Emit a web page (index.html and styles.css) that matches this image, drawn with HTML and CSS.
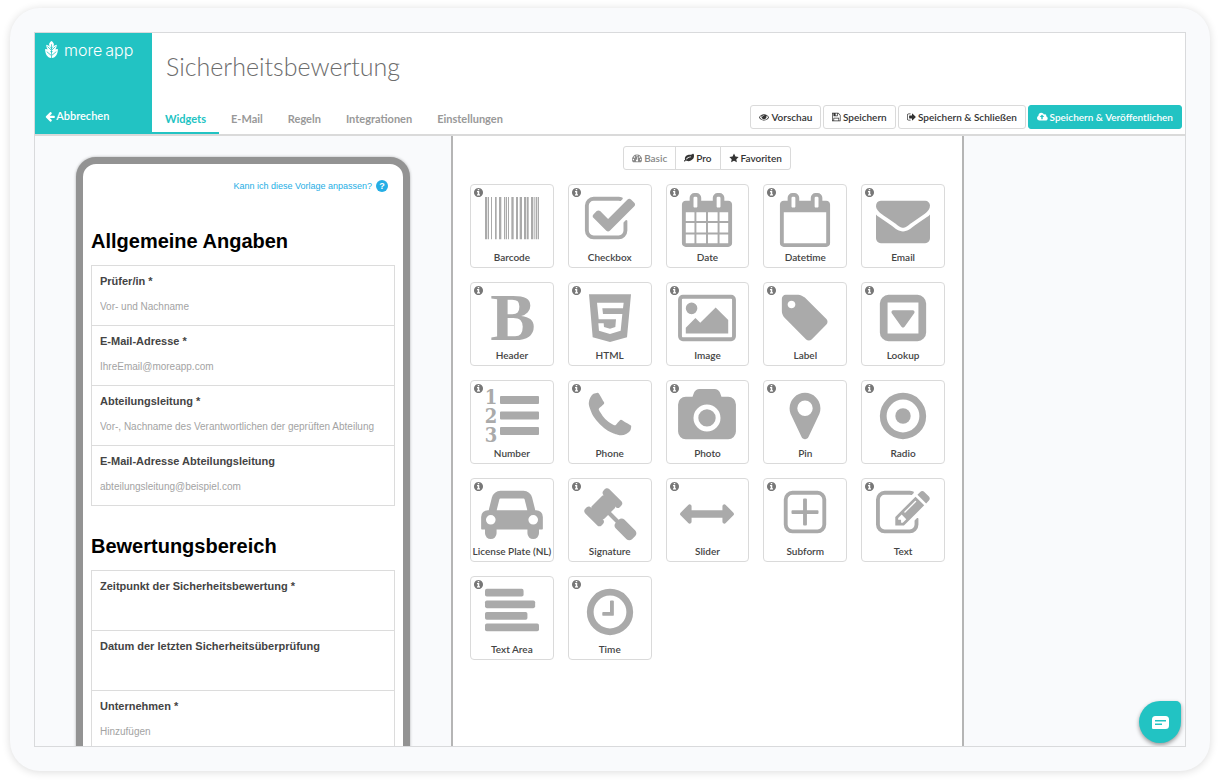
FILE: index.html
```html
<!DOCTYPE html>
<html lang="de">
<head>
<meta charset="utf-8">
<title>Sicherheitsbewertung – moreapp</title>
<meta name="viewport" content="width=device-width, initial-scale=1">
<link rel="stylesheet" href="styles.css">
</head>
<body>
<svg class="sprite" aria-hidden="true">
  <symbol id="info" viewBox="128 128 1536 1536"><path d="M1152 1376v-160q0-14-9-23t-23-9h-96v-512q0-14-9-23t-23-9h-320q-14 0-23 9t-9 23v160q0 14 9 23t23 9h96v320h-96q-14 0-23 9t-9 23v160q0 14 9 23t23 9h448q14 0 23-9t9-23zm-128-896v-160q0-14-9-23t-23-9h-192q-14 0-23 9t-9 23v160q0 14 9 23t23 9h192q14 0 23-9t9-23zm640 416q0 209-103 385.500t-279.500 279.500-385.500 103-385.500-103-279.500-279.500-103-385.500 103-385.500 279.500-279.500 385.500-103 385.500 103 279.500 279.500 103 385.500z"/></symbol>
</svg>
<div class="card">
  <div class="app">
    <header class="topbar">
      <div class="brand">
        <a class="logo" href="#">
          <svg class="logo-mark" viewBox="0 0 24 32" aria-hidden="true"><path d="M12 0c3 2 4.500 4 4.500 6.500S15 10.500 12.700 12V6h-1.400v6C9 10.500 7.500 9 7.500 6.500S9 2 12 0zM2 7c4 1 8 3 9.300 8v4C6 18 2 14 2 7zM22 7c-4 1-8 3-9.300 8v4C18 18 22 14 22 7zM0 15c5 0 10 2 11.300 7v10C4 31 0 25 0 15zM24 15c-5 0-10 2-11.300 7v10C20 31 24 25 24 15z"/><path class="vein" d="M4.500 10.500l6.800 6.500M19.500 10.500L12.700 17M3 20l8.300 7M21 20l-8.300 7"/></svg>
          <span class="wordmark"><span>more</span><span>app</span></span>
        </a>
        <a class="back" href="#"><svg class="fa" viewBox="64 0 1664 1792" aria-hidden="true"><path d="M1664 896v128q0 53-32.500 90.500t-84.500 37.500h-704l293 294q38 36 38 90t-38 90l-75 76q-37 37-90 37-52 0-91-37l-651-652q-37-37-37-90 0-52 37-91l651-650q38-38 91-38 52 0 90 38l75 74q38 38 38 91t-38 91l-293 293h704q52 0 84.500 37.500t32.500 90.500z"/></svg>Abbrechen</a>
      </div>
      <div class="head-main">
        <h1>Sicherheitsbewertung</h1>
        <div class="head-row">
          <nav class="tabs">
            <a class="active" href="#">Widgets</a>
            <a href="#">E-Mail</a>
            <a href="#">Regeln</a>
            <a href="#">Integrationen</a>
            <a href="#">Einstellungen</a>
          </nav>
          <div class="actions">
            <button class="btn" type="button"><svg class="fa" viewBox="0 0 1792 1792" aria-hidden="true"><path d="M1664 960q-152-236-381-353 61 104 61 225 0 185-131.500 316.500t-316.500 131.500-316.500-131.500-131.500-316.500q0-121 61-225-229 117-381 353 133 205 333.500 326.500t434.500 121.500 434.500-121.500 333.500-326.500zm-720-384q0-20-14-34t-34-14q-125 0-214.500 89.500t-89.500 214.500q0 20 14 34t34 14 34-14 14-34q0-86 61-147t147-61q20 0 34-14t14-34zm848 384q0 34-20 69-140 230-376.500 368.500t-499.500 138.500-499.500-139-376.500-368q-20-35-20-69t20-69q140-229 376.500-368t499.500-139 499.500 139 376.500 368q20 35 20 69z"/></svg>Vorschau</button>
            <button class="btn" type="button"><svg class="fa" viewBox="128 0 1536 1792" aria-hidden="true"><path d="M512 1536h768v-384h-768v384zm896 0h128v-896q0-14-10-38.500t-20-34.500l-281-281q-10-10-34-20t-39-10v416q0 40-28 68t-68 28h-576q-40 0-68-28t-28-68v-416h-128v1280h128v-416q0-40 28-68t68-28h832q40 0 68 28t28 68v416zm-384-928v-320q0-13-9.500-22.500t-22.500-9.500h-192q-13 0-22.500 9.500t-9.500 22.500v320q0 13 9.500 22.500t22.500 9.500h192q13 0 22.500-9.500t9.500-22.500zm640 32v928q0 40-28 68t-68 28h-1344q-40 0-68-28t-28-68v-1344q0-40 28-68t68-28h928q40 0 88 20t76 48l280 280q28 28 48 76t20 88z"/></svg>Speichern</button>
            <button class="btn" type="button"><svg class="fa" viewBox="64 0 1664 1792" aria-hidden="true"><path d="M704 1440q0 4 1 20t.5 26.500-3 23.500-10 19.500-20.500 6.500h-320q-119 0-203.500-84.500t-84.500-203.500v-704q0-119 84.500-203.500t203.500-84.500h320q13 0 22.500 9.500t9.500 22.500q0 4 1 20t.5 26.500-3 23.500-10 19.500-20.500 6.500h-320q-66 0-113 47t-47 113v704q0 66 47 113t113 47h312l11.500 1 11.500 3 8 5.500 7 9 2 13.500zm928-544q0 26-19 45l-544 544q-19 19-45 19t-45-19-19-45v-288h-448q-26 0-45-19t-19-45v-384q0-26 19-45t45-19h448v-288q0-26 19-45t45-19 45 19l544 544q19 19 19 45z"/></svg>Speichern &amp; Schließen</button>
            <button class="btn primary" type="button"><svg class="fa" viewBox="-64 0 1920 1792" aria-hidden="true"><path d="M1216 864q0-14-9-23l-352-352q-9-9-23-9t-23 9l-351 351q-10 12-10 24 0 14 9 23t23 9h224v352q0 13 9.500 22.500t22.500 9.500h192q13 0 22.500-9.500t9.500-22.500v-352h224q13 0 22.500-9.500t9.500-22.500zm640 288q0 159-112.500 271.500t-271.500 112.500h-1088q-185 0-316.500-131.500t-131.500-316.500q0-130 70-240t188-165q-2-30-2-43 0-212 150-362t362-150q156 0 285.500 87t188.500 231q71-62 166-62 106 0 181 75t75 181q0 76-41 138 130 31 213.500 135.500t83.500 238.500z"/></svg>Speichern &amp; Veröffentlichen</button>
          </div>
        </div>
      </div>
    </header>

    <main class="workspace">
      <section class="preview">
        <form class="phone">
          <a class="help" href="#">Kann ich diese Vorlage anpassen? <span class="help-badge">?</span></a>
          <h2>Allgemeine Angaben</h2>
          <div class="fields">
            <div class="field"><label for="f1">Prüfer/in *</label><input id="f1" type="text" placeholder="Vor- und Nachname"></div>
            <div class="field"><label for="f2">E-Mail-Adresse *</label><input id="f2" type="text" placeholder="IhreEmail@moreapp.com"></div>
            <div class="field"><label for="f3">Abteilungsleitung *</label><input id="f3" type="text" placeholder="Vor-, Nachname des Verantwortlichen der geprüften Abteilung"></div>
            <div class="field"><label for="f4">E-Mail-Adresse Abteilungsleitung</label><input id="f4" type="text" placeholder="abteilungsleitung@beispiel.com"></div>
          </div>
          <h2>Bewertungsbereich</h2>
          <div class="fields">
            <div class="field"><label for="f5">Zeitpunkt der Sicherheitsbewertung *</label><input id="f5" type="text"></div>
            <div class="field"><label for="f6">Datum der letzten Sicherheitsüberprüfung</label><input id="f6" type="text"></div>
            <div class="field"><label for="f7">Unternehmen *</label><input id="f7" type="text" placeholder="Hinzufügen"></div>
          </div>
        </form>
      </section>

      <section class="palette">
        <div class="segments">
          <button class="current" type="button"><svg class="fa" viewBox="0 0 1792 1792" aria-hidden="true"><path d="M384 1152q0-53-37.500-90.500t-90.500-37.500-90.500 37.500-37.500 90.500 37.500 90.500 90.500 37.500 90.500-37.500 37.500-90.500zm192-448q0-53-37.500-90.500t-90.500-37.500-90.500 37.500-37.500 90.500 37.500 90.500 90.500 37.500 90.500-37.500 37.500-90.500zm428 481l101-382q6-26-7.500-48.500t-38.500-29.500-48 6.500-30 39.500l-101 382q-60 5-107 43.500t-63 98.500q-20 77 20 146t117 89 146-20 89-117q16-60-6-117t-72-91zm660-33q0-53-37.500-90.500t-90.500-37.500-90.500 37.500-37.500 90.500 37.500 90.500 90.500 37.500 90.500-37.500 37.500-90.500zm-640-640q0-53-37.500-90.500t-90.500-37.500-90.500 37.500-37.500 90.500 37.500 90.500 90.500 37.500 90.500-37.500 37.500-90.500zm448 192q0-53-37.500-90.500t-90.500-37.500-90.500 37.500-37.500 90.500 37.500 90.500 90.500 37.500 90.500-37.500 37.500-90.500zm320 448q0 261-141 483-19 29-54 29h-1402q-35 0-54-29-141-221-141-483 0-182 71-348t191-286 286-191 348-71 348 71 286 191 191 286 71 348z"/></svg>Basic</button>
          <button type="button"><svg class="fa" viewBox="0 0 1792 1792" aria-hidden="true"><path d="M1280 704q0-26-19-45t-45-19q-172 0-318 49.500t-259.500 134-235.500 219.500q-19 21-19 45 0 26 19 45t45 19q24 0 45-19 27-24 74-71t67-66q137-124 268.500-176t313.500-52q26 0 45-19t19-45zm512-198q0 95-20 193-46 224-184.500 383t-357.500 268q-214 108-438 108-148 0-286-47-15-5-88-42t-96-37q-16 0-39.500 32t-45 70-52.500 70-60 32q-43 0-63.500-17.500t-45.500-59.500q-2-4-6-11t-5.500-10-3-9.500-1.500-13.500q0-35 31-73.500t68-65.500 68-56 31-48q0-4-14-38t-16-44q-9-51-9-104 0-115 43.500-220t119-184.500 170.500-139 204-95.500q55-18 145-25.500t179.500-9 178.500-6 163.500-24 113.500-56.500l29.500-29.500 29.500-28 27-20 36.500-16 43.500-4.500q39 0 70.500 46t47.500 112 24 124 8 96z"/></svg>Pro</button>
          <button type="button"><svg class="fa" viewBox="0 0 1792 1792" aria-hidden="true"><path d="M896 90l258 522 576 84-417 406 99 574-516-271-516 271 99-574L62 696l576-84z"/></svg>Favoriten</button>
        </div>

        <div class="grid">
          <button class="tile" type="button"><svg class="info"><use href="#info"/></svg>
            <svg class="pic" viewBox="0 0 162 162"><path d="M0 12h7v127H0zM9 12h3v127H9zM18 12h3v127h-3zM30 12h5v127h-5zM42 12h7v127h-7zM57 12h3v127h-3zM62 12h4v127h-4zM69 12h3v127h-3zM79 12h7v127h-7zM93 12h6v127h-6zM104 12h7v127h-7zM117 12h7v127h-7zM126 12h5v127h-5zM138 12h7v127h-7zM148 12h3v127h-3zM153 12h3v127h-3zM158 12h4v127h-4z"/></svg><span>Barcode</span></button>
          <button class="tile" type="button"><svg class="info"><use href="#info"/></svg>
            <svg class="pic" viewBox="0 0 1792 1792"><path d="M1472 930v318q0 119-84.500 203.500t-203.500 84.500h-832q-119 0-203.500-84.500t-84.500-203.500v-832q0-119 84.500-203.500t203.500-84.500h832q63 0 117 25 15 7 18 23 3 17-9 29l-49 49q-10 10-23 10-3 0-9-2-23-6-45-6h-832q-66 0-113 47t-47 113v832q0 66 47 113t113 47h832q66 0 113-47t47-113v-254q0-13 9-22l64-64q10-10 23-10 6 0 12 3 20 8 20 29zm231-489l-814 814q-24 24-57 24t-57-24l-430-430q-24-24-24-57t24-57l110-110q24-24 57-24t57 24l263 263 647-647q24-24 57-24t57 24l110 110q24 24 24 57t-24 57z"/></svg><span>Checkbox</span></button>
          <button class="tile" type="button"><svg class="info"><use href="#info"/></svg>
            <svg class="pic" viewBox="0 0 1792 1792"><path d="M192 1664h288v-288h-288v288zm352 0h320v-288h-320v288zm-352-352h288v-320h-288v320zm352 0h320v-320h-320v320zm-352-384h288v-288h-288v288zm736 736h320v-288h-320v288zm-384-736h320v-288h-320v288zm768 736h288v-288h-288v288zm-384-352h320v-320h-320v320zm-352-864v-288q0-13-9.500-22.500t-22.500-9.500h-64q-13 0-22.500 9.500t-9.500 22.500v288q0 13 9.500 22.500t22.500 9.500h64q13 0 22.500-9.500t9.500-22.500zm736 864h288v-320h-288v320zm-384-384h320v-288h-320v288zm384 0h288v-288h-288v288zm32-480v-288q0-13-9.500-22.500t-22.500-9.500h-64q-13 0-22.500 9.500t-9.500 22.500v288q0 13 9.500 22.500t22.500 9.500h64q13 0 22.500-9.500t9.500-22.500zm384-64v1280q0 52-38 90t-90 38h-1408q-52 0-90-38t-38-90v-1280q0-52 38-90t90-38h128v-96q0-66 47-113t113-47h64q66 0 113 47t47 113v96h384v-96q0-66 47-113t113-47h64q66 0 113 47t47 113v96h128q52 0 90 38t38 90z"/></svg><span>Date</span></button>
          <button class="tile" type="button"><svg class="info"><use href="#info"/></svg>
            <svg class="pic" viewBox="0 0 1792 1792"><path d="M192 1664h1408v-1024h-1408v1024zm384-1216v-288q0-13-9.500-22.500t-22.500-9.500h-64q-13 0-22.500 9.500t-9.500 22.500v288q0 13 9.500 22.500t22.500 9.500h64q13 0 22.500-9.500t9.500-22.500zm768 0v-288q0-13-9.500-22.500t-22.500-9.500h-64q-13 0-22.500 9.500t-9.500 22.500v288q0 13 9.500 22.500t22.500 9.500h64q13 0 22.500-9.500t9.500-22.500zm384-64v1280q0 52-38 90t-90 38h-1408q-52 0-90-38t-38-90v-1280q0-52 38-90t90-38h128v-96q0-66 47-113t113-47h64q66 0 113 47t47 113v96h384v-96q0-66 47-113t113-47h64q66 0 113 47t47 113v96h128q52 0 90 38t38 90z"/></svg><span>Datetime</span></button>
          <button class="tile" type="button"><svg class="info"><use href="#info"/></svg>
            <svg class="pic" viewBox="0 0 1792 1792"><path d="M1792 710v794q0 66-47 113t-113 47h-1472q-66 0-113-47t-47-113v-794q44 49 101 87 362 246 497 345 57 42 92.500 65.500t94.500 48 110 24.500h2q51 0 110-24.500t94.500-48 92.500-65.500q170-123 498-345 57-39 100-87zm0-294q0 79-49 151t-122 123q-376 261-468 325-10 7-42.500 31t-54 38.500-52 32.500-57.500 27-50 9h-2q-23 0-50-9t-57.500-27-52-32.500-54-38.500-42.500-31q-91-64-262-182.500t-205-142.500q-62-42-117-115.500t-55-136.500q0-78 41.500-130t118.500-52h1472q65 0 112.500 47t47.500 113z"/></svg><span>Email</span></button>

          <button class="tile" type="button"><svg class="info"><use href="#info"/></svg>
            <svg class="pic" viewBox="0 0 54 54"><text class="glyph-b" x="28" y="49">B</text></svg><span>Header</span></button>
          <button class="tile" type="button"><svg class="info"><use href="#info"/></svg>
            <svg class="pic" viewBox="369 65 162 162"><path fill-rule="evenodd" d="M387 75h126l-12 129-51 14-52-14zM411 100l5 50h52l-2 23-16 5-18-5-1-11h-16l2 22 33 10 32-10 5-50h-58l-2-17h62l2-17z"/></svg><span>HTML</span></button>
          <button class="tile" type="button"><svg class="info"><use href="#info"/></svg>
            <svg class="pic wide" viewBox="-64 0 1920 1792"><path d="M576 576q0 80-56 136t-136 56-136-56-56-136 56-136 136-56 136 56 56 136zm1024 384v448h-1408v-192l320-320 160 160 512-512zm96-704h-1600q-13 0-22.500 9.500t-9.500 22.500v1216q0 13 9.500 22.500t22.500 9.500h1600q13 0 22.500-9.500t9.500-22.500v-1216q0-13-9.500-22.500t-22.500-9.500zm160 32v1216q0 66-47 113t-113 47h-1600q-66 0-113-47t-47-113v-1216q0-66 47-113t113-47h1600q66 0 113 47t47 113z"/></svg><span>Image</span></button>
          <button class="tile" type="button"><svg class="info"><use href="#info"/></svg>
            <svg class="pic" viewBox="0 0 1792 1792"><path d="M576 448q0-53-37.500-90.500t-90.500-37.500-90.500 37.500-37.500 90.500 37.500 90.500 90.500 37.500 90.500-37.500 37.500-90.500zm1067 576q0 53-37 90l-491 492q-39 37-91 37-53 0-90-37l-715-716q-38-37-64.500-101t-26.500-117v-416q0-52 38-90t90-38h416q53 0 117 26.500t102 64.500l715 714q37 39 37 91z"/></svg><span>Label</span></button>
          <button class="tile" type="button"><svg class="info"><use href="#info"/></svg>
            <svg class="pic" viewBox="0 0 1792 1792"><path fill-rule="evenodd" d="M416 128h960q119 0 203.500 84.500T1664 416v960q0 119-84.500 203.500T1376 1664H416q-119 0-203.500-84.500T128 1376V416q0-119 84.500-203.500T416 128zM384 384v1024h1024V384z"/><path d="M1273 675q17 35-5 66l-320 448q-19 27-52 27t-52-27L524 741q-22-31-5-66 17-35 57-35h640q40 0 57 35z"/></svg><span>Lookup</span></button>

          <button class="tile" type="button"><svg class="info"><use href="#info"/></svg>
            <svg class="pic wide" viewBox="0 0 58 54"><g class="digits"><text x="8" y="15">1</text><text x="8" y="34">2</text><text x="8" y="53">3</text></g><path d="M18 7h37q1 0 1 1v6q0 1-1 1H18q-1 0-1-1V8q0-1 1-1zM18 22.500h37q1 0 1 1v6q0 1-1 1H18q-1 0-1-1v-6q0-1 1-1zM18 38h37q1 0 1 1v6q0 1-1 1H18q-1 0-1-1v-6q0-1 1-1z"/></svg><span>Number</span></button>
          <button class="tile" type="button"><svg class="info"><use href="#info"/></svg>
            <svg class="pic" viewBox="0 0 1792 1792"><path d="M1600 1240q0 27-10 70.500t-21 68.500q-21 50-122 106-94 51-186 51-27 0-53-3.500t-57.500-12.500-47-14.500-55.500-20.500-49-18q-98-35-175-83-127-79-264-216t-216-264q-48-77-83-175-3-9-18-49t-20.500-55.500-14.500-47-12.500-57.500-3.500-53q0-92 51-186 56-101 106-122 25-11 68.500-21t70.500-10q14 0 21 3 18 6 53 76 11 19 30 54t35 63.500 31 53.500q3 4 17.500 25t21.500 35.500 7 28.500q0 20-28.500 50t-62 55-62 53-28.500 46q0 9 5 22.500t8.500 20.500 14 24 11.500 19q76 137 174 235t235 174q2 1 19 11.500t24 14 20.500 8.500 22.500 5q18 0 46-28.500t53-62 55-62 50-28.500q14 0 28.500 7t35.500 21.500 25 17.500q25 15 53.500 31t63.500 35 54 30q70 35 76 53 3 7 3 21z"/></svg><span>Phone</span></button>
          <button class="tile" type="button"><svg class="info"><use href="#info"/></svg>
            <svg class="pic wide" viewBox="0 0 1920 1792"><path d="M960 672q119 0 203.500 84.500t84.500 203.500-84.500 203.500-203.500 84.500-203.500-84.500-84.500-203.500 84.500-203.500 203.500-84.500zm704-416q106 0 181 75t75 181v896q0 106-75 181t-181 75h-1408q-106 0-181-75t-75-181v-896q0-106 75-181t181-75h224l51-136q19-49 69.500-84.500t103.500-35.500h512q53 0 103.500 35.500t69.500 84.500l51 136h224zm-704 1152q185 0 316.500-131.500t131.500-316.500-131.500-316.500-316.500-131.500-316.500 131.500-131.500 316.500 131.500 316.500 316.500 131.500z"/></svg><span>Photo</span></button>
          <button class="tile" type="button"><svg class="info"><use href="#info"/></svg>
            <svg class="pic" viewBox="0 0 1792 1792"><path d="M1152 640q0-106-75-181t-181-75-181 75-75 181 75 181 181 75 181-75 75-181zm256 0q0 109-33 179l-364 774q-16 33-47.500 52t-67.500 19-67.500-19-46.500-52l-365-774q-33-70-33-179 0-212 150-362t362-150 362 150 150 362z"/></svg><span>Pin</span></button>
          <button class="tile" type="button"><svg class="info"><use href="#info"/></svg>
            <svg class="pic" viewBox="0 0 1792 1792"><circle class="ring" cx="896" cy="896" r="656"/><circle cx="896" cy="896" r="256"/></svg><span>Radio</span></button>

          <button class="tile" type="button"><svg class="info"><use href="#info"/></svg>
            <svg class="pic wider" viewBox="0 0 2048 1792"><path d="M480 1088q0-66-47-113t-113-47-113 47-47 113 47 113 113 47 113-47 47-113zm36-320h1016l-89-357q-2-8-14-17.500t-21-9.500h-768q-9 0-21 9.500t-14 17.500zm1372 320q0-66-47-113t-113-47-113 47-47 113 47 113 113 47 113-47 47-113zm160-96v384q0 14-9 23t-23 9h-96v128q0 80-56 136t-136 56-136-56-56-136v-128h-1024v128q0 80-56 136t-136 56-136-56-56-136v-128h-96q-14 0-23-9t-9-23v-384q0-93 65.500-158.500t158.500-65.500h28l105-419q23-94 104-157.500t179-63.500h768q98 0 179 63.500t104 157.500l105 419h28q93 0 158.500 65.500t65.500 158.500z"/></svg><span>License Plate (NL)</span></button>
          <button class="tile" type="button"><svg class="info"><use href="#info"/></svg>
            <svg class="pic" viewBox="0 0 1792 1792"><path d="M1771 1536q0 53-37 90l-107 108q-39 37-91 37-53 0-90-37l-363-364q-38-36-38-90 0-53 43-96l-256-256-126 126q-14 14-34 14t-34-14q2 2 12.500 12t12.500 13 10 11.500 10 13.500 6 13.500 5.500 16.500 1.500 18q0 38-28 68-3 3-16.500 18t-19 20.500-18.500 16.500-22 15.500-22 9-26 4.500q-40 0-68-28l-408-408q-28-28-28-68 0-13 4.500-26t9-22 15.500-22 16.500-18.500 20.500-19 18-16.500q30-28 68-28 10 0 18 1.500t16.500 5.500 13.500 6 13.500 10 11.500 10 13 12.500 12 12.500q-14-14-14-34t14-34l348-348q14-14 34-14t34 14q-2-2-12.500-12t-12.500-13-10-11.500-10-13.500-6-13.500-5.500-16.500-1.500-18q0-38 28-68 3-3 16.500-18t19-20.500 18.500-16.500 22-15.500 22-9 26-4.500q40 0 68 28l408 408q28 28 28 68 0 13-4.500 26t-9 22-15.500 22-16.500 18.500-20.500 19-18 16.500q-30 28-68 28-10 0-18-1.500t-16.500-5.500-13.500-6-13.500-10-11.500-10-13-12.500-12-12.500q14 14 14 34t-14 34l-126 126 256 256q43-43 96-43 52 0 91 37l363 363q37 39 37 91z"/></svg><span>Signature</span></button>
          <button class="tile" type="button"><svg class="info"><use href="#info"/></svg>
            <svg class="pic" viewBox="0 0 1792 1792"><path d="M1792 896q0 26-19 45l-256 256q-19 19-45 19t-45-19-19-45v-128h-1024v128q0 26-19 45t-45 19-45-19l-256-256q-19-19-19-45t19-45l256-256q19-19 45-19t45 19 19 45v128h1024v-128q0-26 19-45t45-19 45 19l256 256q19 19 19 45z"/></svg><span>Slider</span></button>
          <button class="tile" type="button"><svg class="info"><use href="#info"/></svg>
            <svg class="pic" viewBox="0 0 1792 1792"><rect class="frame" x="256" y="192" width="1280" height="1280" rx="224"/><path d="M480 768h352V416q0-32 32-32h64q32 0 32 32v352h352q32 0 32 32v64q0 32-32 32H960v352q0 32-32 32h-64q-32 0-32-32V896H480q-32 0-32-32v-64q0-32 32-32z"/></svg><span>Subform</span></button>
          <button class="tile" type="button"><svg class="info"><use href="#info"/></svg>
            <svg class="pic" viewBox="0 0 1792 1792"><path d="M888 1184l116-116-152-152-116 116v56h96v96h56zm440-720q-16-16-33 1l-350 350q-17 17-1 33t33-1l350-350q17-17 1-33zm80 594v190q0 119-84.500 203.500t-203.500 84.500h-832q-119 0-203.500-84.500t-84.500-203.500v-832q0-119 84.500-203.500t203.500-84.500h832q63 0 117 25 15 7 18 23 3 17-9 29l-49 49q-14 14-32 8-23-6-45-6h-832q-66 0-113 47t-47 113v832q0 66 47 113t113 47h832q66 0 113-47t47-113v-126q0-13 9-22l64-64q15-15 35-7t20 29zm-96-738l288 288-672 672h-288v-288zm444 132l-92 92-288-288 92-92q28-28 68-28t68 28l152 152q28 28 28 68t-28 68z"/></svg><span>Text</span></button>

          <button class="tile" type="button"><svg class="info"><use href="#info"/></svg>
            <svg class="pic" viewBox="0 0 1792 1792"><rect x="0" y="128" width="1280" height="256" rx="60"/><rect x="0" y="512" width="1664" height="256" rx="60"/><rect x="0" y="896" width="1408" height="256" rx="60"/><rect x="0" y="1280" width="1792" height="256" rx="60"/></svg><span>Text Area</span></button>
          <button class="tile" type="button"><svg class="info"><use href="#info"/></svg>
            <svg class="pic" viewBox="0 0 1792 1792"><circle class="ring" cx="896" cy="896" r="656"/><path d="M1024 544v448q0 14-9 23t-23 9h-320q-14 0-23-9t-9-23v-64q0-14 9-23t23-9h224v-352q0-14 9-23t23-9h64q14 0 23 9t9 23z"/></svg><span>Time</span></button>
        </div>
      </section>
    </main>

    <button class="chat" type="button" aria-label="Chat">
      <svg viewBox="0 0 17 13" aria-hidden="true"><path fill-rule="evenodd" d="M3.500 0h10Q17 0 17 3.500v6Q17 13 13.500 13H1q-1 0-1-1V3.500Q0 0 3.500 0zM3 4v1.500h11V4zM3 7.500V9h7V7.500z"/></svg>
    </button>
  </div>
</div>
</body>
</html>
```
FILE: styles.css
```css
* { box-sizing: border-box; }

body {
  display: flex;
  height: 100vh;
  margin: 0;
  padding: 8px 10px 12px;
  background: #fff;
  color: #333;
  font-family: Lato, sans-serif;
  font-size: 10px;
}

a { color: inherit; text-decoration: none; }
button { margin: 0; font: inherit; color: inherit; cursor: pointer; }
svg { display: block; fill: currentColor; }
.sprite { display: none; }

.card {
  flex: 1;
  min-width: 0;
  display: flex;
  padding: 24px;
  background: #f9fafc;
  border-radius: 30px;
  box-shadow: 0 1px 8px rgba(0, 0, 0, 0.14);
}

.app {
  position: relative;
  flex: 1;
  min-width: 0;
  display: flex;
  flex-direction: column;
  overflow: hidden;
  border: 1px solid #d9dadc;
}

/* Header */
.topbar {
  display: flex;
  flex: none;
  background: #fff;
  box-shadow: 0 2px 0 #dadada;
  z-index: 1;
}

.brand {
  width: 117px;
  min-height: 101px;
  padding: 8px 10px 11px;
  display: flex;
  flex-direction: column;
  justify-content: space-between;
  background: #22c3c3;
  color: #fff;
}

.logo {
  display: flex;
  align-items: center;
  gap: 6px;
  font: 300 16px/16px Inter, sans-serif;
}

.wordmark { display: flex; gap: 3px; }
.logo-mark { width: 13px; height: 17px; }
.vein { fill: none; stroke: #22c3c3; stroke-width: 1.5; }

.back {
  display: flex;
  align-items: center;
  gap: 1px;
  font-size: 11px;
  line-height: 14px;
  font-weight: 600;
}

.fa { height: 10px; width: auto; flex: none; }
.back .fa { height: 11px; }

.head-main {
  flex: 1;
  display: flex;
  flex-direction: column;
  justify-content: space-between;
}

h1 {
  margin: 17px 0 0 14px;
  font-size: 25px;
  line-height: 32px;
  font-weight: 300;
  color: #6c6c6c;
}

.head-row { display: flex; justify-content: space-between; }

.tabs { display: flex; }

.tabs a {
  padding: 7px 13px 6px 12px;
  border-bottom: 2px solid transparent;
  font-size: 11px;
  line-height: 14px;
  font-weight: 700;
  color: #999;
}

.tabs .active { padding-left: 13px; color: #22c3c3; border-color: #22c3c3; }

.actions { display: flex; gap: 2px; padding-right: 3px; height: 24px; }

.btn, .segments button {
  display: flex;
  align-items: center;
  gap: 2px;
  height: 24px;
  padding: 0 8px;
  border: 1px solid #dadada;
  border-radius: 3px;
  background: #fff;
  font-weight: 600;
  white-space: nowrap;
}

.btn.primary { background: #22c3c3; border-color: #22c3c3; color: #fff; }

/* Workspace */
.workspace {
  flex: 1;
  min-height: 0;
  display: grid;
  grid-template-columns: 416fr 513fr 221fr;
  overflow: hidden;
}

.preview { padding: 23px 41px 0; }

.phone {
  height: 700px;
  padding: 14px 8px;
  border: 7px solid #939393;
  border-radius: 20px;
  background: #fff;
  box-shadow: 0 0 3px rgba(0, 0, 0, 0.3);
  font-family: "Liberation Sans", Arial, sans-serif;
}

.help {
  display: flex;
  justify-content: flex-end;
  align-items: center;
  gap: 4px;
  padding-right: 7px;
  font-size: 9px;
  line-height: 16px;
  color: #25aee5;
}

.help-badge {
  width: 12px;
  height: 12px;
  border-radius: 50%;
  background: #25aee5;
  color: #fff;
  font-weight: 700;
  line-height: 12px;
  text-align: center;
}

.phone h2 {
  margin: 35px 0 12px;
  font-size: 20px;
  line-height: 24px;
  font-weight: 700;
  color: #000;
}

.fields + h2 { margin-top: 28px; }

.fields { border: solid #dcdcdc; border-width: 0 1px 1px; }

.field {
  display: flex;
  flex-direction: column;
  gap: 10px;
  padding: 7px 8px 10px;
  border-top: 1px solid #dcdcdc;
}

.field label {
  font-size: 11px;
  line-height: 16px;
  font-weight: 700;
  color: #444;
}

.field input {
  width: 100%;
  height: 16px;
  padding: 0;
  border: 0;
  background: none;
  font: 10px/16px "Liberation Sans", Arial, sans-serif;
}

.field input::placeholder { color: #a3a3a3; opacity: 1; }

/* Widget palette */
.palette {
  padding: 12px 17px 0;
  border: solid #b5b5b5;
  border-width: 0 2px;
  background: #fff;
}

.segments { display: flex; justify-content: center; }
.segments button { border-radius: 0; margin-left: -1px; }
.segments button:first-child { border-radius: 3px 0 0 3px; }
.segments button:last-child { border-radius: 0 3px 3px 0; }
.segments .current { color: #888; }

.grid {
  display: grid;
  grid-template-columns: repeat(5, 1fr);
  gap: 14px;
  margin-top: 14px;
}

.tile {
  position: relative;
  aspect-ratio: 1;
  min-width: 0;
  padding: 8px 0 0;
  display: flex;
  flex-direction: column;
  align-items: center;
  border: 1px solid #dadada;
  border-radius: 4px;
  background: #fff;
  color: #444;
  font-weight: 600;
  line-height: 20px;
  white-space: nowrap;
}

.info {
  position: absolute;
  top: 3px;
  left: 3px;
  width: 9px;
  height: 9px;
  color: #777;
}

.pic { width: 54px; height: 54px; flex: none; color: #aaa; overflow: visible; }
.pic.wide { width: 58px; }
.pic.wider { width: 62px; }
.ring { fill: none; stroke: currentColor; stroke-width: 224; }
.frame { fill: none; stroke: currentColor; stroke-width: 128; }
.glyph-b { font: 700 68px "Liberation Serif", serif; text-anchor: middle; }
.digits { font: 700 20px "DejaVu Serif Condensed", "DejaVu Serif", serif; text-anchor: middle; }

/* Floating chat launcher */
.chat {
  position: absolute;
  right: 4px;
  bottom: 3px;
  width: 42px;
  height: 42px;
  padding: 0;
  display: grid;
  place-items: center;
  border: 0;
  border-radius: 50% 5px 50% 50%;
  background: #22c3c3;
  color: #fff;
  box-shadow: 0 2px 4px rgba(0, 0, 0, 0.4);
}

.chat svg { width: 17px; height: 13px; }
```
